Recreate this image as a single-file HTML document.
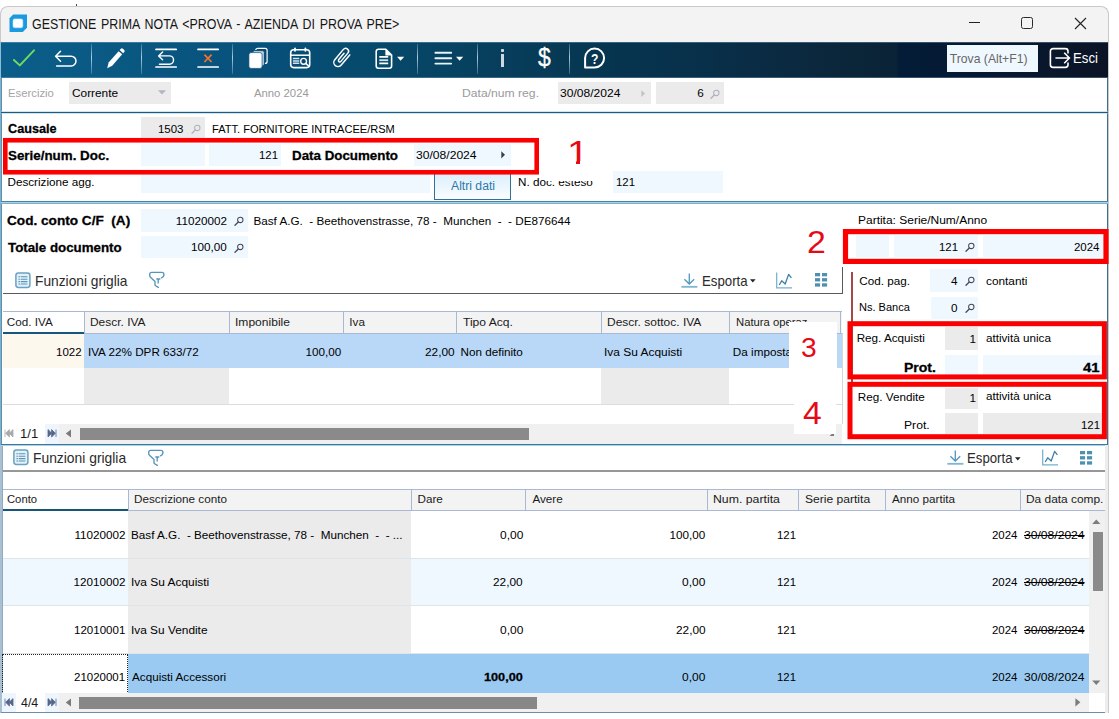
<!DOCTYPE html>
<html lang="it"><head><meta charset="utf-8"><title>GESTIONE PRIMA NOTA</title>
<style>
html,body{margin:0;padding:0;background:#fff;}
body{width:1119px;height:719px;position:relative;overflow:hidden;font-family:"Liberation Sans",sans-serif;}
#w div,#w span,#w svg{position:absolute;}
#w span{white-space:pre;}
#w{position:absolute;left:0;top:0;width:1119px;height:719px;overflow:hidden;}
</style></head><body><div id="w">
<div style="left:0;top:6px;width:1109px;height:707px;box-sizing:border-box;border:1px solid #c9c9c9;border-bottom:none;border-radius:8px 8px 0 0;background:#f3f3f3;"></div>
<div style="left:76px;top:4px;width:1px;height:2px;background:#2a4a7a;"></div>
<svg style="left:9px;top:14px;" width="18" height="18" viewBox="0 0 18 18"><path d="M4.2 0.5H18v13.2L13.8 18H0.5V4.2Z" fill="#1b9ae0"/><rect x="4" y="4.9" width="9.8" height="8.8" rx="1.7" fill="#fff" stroke="#bfe9fb" stroke-width=".6"/></svg>
<span style="left:32.38px;top:15px;font-size:14.5px;line-height:19px;color:#161616;transform:scaleX(0.8569);transform-origin:0 0;word-spacing:1.6px;">GESTIONE PRIMA NOTA &lt;PROVA - AZIENDA DI PROVA PRE&gt;</span>
<div style="left:969px;top:22.3px;width:11px;height:1.1px;background:#222;"></div>
<div style="left:1021px;top:17.4px;width:11.8px;height:11.4px;box-sizing:border-box;border:1.3px solid #2a2a2a;border-radius:2.4px;"></div>
<svg style="left:1074px;top:17px;" width="13" height="13" viewBox="0 0 13 13"><path d="M1 1L12 12M12 1L1 12" stroke="#222" stroke-width="1.1" fill="none"/></svg>
<div style="left:1px;top:42px;width:1107px;height:35.5px;background:linear-gradient(90deg,#0b5e8a 0%,#095882 12%,#07507a 24%,#064a6c 33%,#07405f 43%,#073954 51%,#06344f 56%,#08304a 63%,#0a2b43 69%,#0b263a 76%,#0a2236 80.9%,#031c37 81.1%,#071830 90%,#0b1426 100%);"></div>
<div style="left:1px;top:42px;width:1107px;height:1px;background:rgba(150,190,215,.35);"></div>
<div style="left:1px;top:76.6px;width:1107px;height:1px;background:rgba(150,190,215,.35);"></div>
<div style="left:0px;top:42px;width:1.4px;height:35.6px;background:#8fbcd6;"></div>
<div style="left:90.5px;top:44px;width:1.4px;height:30px;background:linear-gradient(180deg,rgba(190,215,230,.25),rgba(200,225,238,.85) 45%,rgba(190,215,230,.25));"></div>
<div style="left:140.5px;top:44px;width:1.4px;height:30px;background:linear-gradient(180deg,rgba(190,215,230,.25),rgba(200,225,238,.85) 45%,rgba(190,215,230,.25));"></div>
<div style="left:232px;top:44px;width:1.4px;height:30px;background:linear-gradient(180deg,rgba(190,215,230,.25),rgba(200,225,238,.85) 45%,rgba(190,215,230,.25));"></div>
<div style="left:417px;top:44px;width:1.4px;height:30px;background:linear-gradient(180deg,rgba(190,215,230,.25),rgba(200,225,238,.85) 45%,rgba(190,215,230,.25));"></div>
<div style="left:476.5px;top:44px;width:1.4px;height:30px;background:linear-gradient(180deg,rgba(190,215,230,.25),rgba(200,225,238,.85) 45%,rgba(190,215,230,.25));"></div>
<div style="left:568.5px;top:44px;width:1.4px;height:30px;background:linear-gradient(180deg,rgba(190,215,230,.25),rgba(200,225,238,.85) 45%,rgba(190,215,230,.25));"></div>
<svg style="left:12px;top:47px;" width="24" height="22" viewBox="0 0 24 22"><path d="M1.9 13L7.8 18.4L22 3.3" stroke="#74dc5c" stroke-width="1.9" fill="none" stroke-linecap="round" stroke-linejoin="round"/></svg>
<svg style="left:53px;top:47px;" width="26" height="22" viewBox="0 0 26 22"><path d="M7.5 4.2L2.6 9.2L7.5 14.2M3 9.2H18.1a4.9 4.9 0 0 1 0 9.8H3.6" stroke="#fff" stroke-width="1.5" fill="none" stroke-linecap="round" stroke-linejoin="round"/></svg>
<svg style="left:104.2px;top:47px;" width="22" height="24" viewBox="0 0 22 24"><path d="M3.2 21.2L4.6 15.6L14.6 4.2L18.2 7.2L8.2 18.8Z" fill="#fff"/><path d="M15.6 3.1L16.7 1.9a1.6 1.6 0 0 1 2.2-.1l1.3 1.1a1.6 1.6 0 0 1 .1 2.2L19.2 6.3Z" fill="#fff"/></svg>
<svg style="left:154px;top:47px;" width="24" height="23" viewBox="0 0 24 23"><path d="M2 2.4H22.2M2 20H22.2" stroke="#fff" stroke-width="1.7" fill="none" stroke-linecap="round"/><path d="M8.6 5.1L4.6 8.9L8.6 12.7M5 8.9H15.4a4.15 4.15 0 0 1 0 8.3H5.4" stroke="#fff" stroke-width="1.4" fill="none" stroke-linecap="round" stroke-linejoin="round"/></svg>
<svg style="left:196px;top:47px;" width="24" height="23" viewBox="0 0 24 23"><path d="M2 2.4H22.2M2 20H22.2" stroke="#fff" stroke-width="1.7" fill="none" stroke-linecap="round"/><path d="M8.4 7.6L15.6 15M15.6 7.6L8.4 15" stroke="#f0742a" stroke-width="1.7" fill="none"/></svg>
<svg style="left:247px;top:46px;" width="23" height="24" viewBox="0 0 23 24"><rect x="8.7" y="2.4" width="11.4" height="15" rx="2" fill="#0a4a70" stroke="#fff" stroke-width="1.2"/><rect x="5.6" y="4.6" width="11.8" height="15.4" rx="2" fill="#b4d4ea" stroke="#0a4a70" stroke-width="1"/><rect x="1.9" y="6.6" width="13.2" height="15.8" rx="2.2" fill="#fff" stroke="#0a4a70" stroke-width=".7"/></svg>
<svg style="left:288px;top:46px;" width="24" height="24" viewBox="0 0 24 24"><rect x="2.7" y="3.8" width="19" height="17.8" rx="3" fill="none" stroke="#fff" stroke-width="1.6"/><path d="M2.7 9.2H21.7" stroke="#fff" stroke-width="1.5" fill="none"/><path d="M7 2.4V4.8M17.4 2.4V4.8" stroke="#fff" stroke-width="1.9" fill="none" stroke-linecap="round"/><path d="M4.9 12.6H11.3M4.9 15H11.3M4.9 17.3H11.3" stroke="#cfe4f2" stroke-width="1.5"/><circle cx="15.6" cy="15.3" r="2.9" fill="#0a466a" stroke="#fff" stroke-width="1.4"/><path d="M17.7 17.4L21.6 20.8" stroke="#fff" stroke-width="1.5"/></svg>
<svg style="left:330px;top:46px;" width="24" height="24" viewBox="0 0 24 24"><g transform="translate(12,11.6) rotate(40)"><path d="M4.2 -7V6.2A4.2 4.2 0 0 1 -4.2 6.2V-7.2A2.9 2.9 0 0 1 1.6 -7.2V3.6A1.4 1.4 0 0 1 -1.2 3.6V-4.6" stroke="#fff" stroke-width="1.5" fill="none" stroke-linecap="round" stroke-linejoin="round"/></g></svg>
<svg style="left:374px;top:46px;" width="20" height="24" viewBox="0 0 20 24"><path d="M4.4 3.2H11.8L17.6 9V20a2.2 2.2 0 0 1-2.2 2.2H4.4a2.2 2.2 0 0 1-2.2-2.2V5.4A2.2 2.2 0 0 1 4.4 3.2Z" fill="none" stroke="#fff" stroke-width="1.6" stroke-linejoin="round"/><path d="M11.4 3V9.4H17.8Z" fill="#fff"/><path d="M5.3 10.9H14.2M5.3 17.4H14.2" stroke="#fff" stroke-width="1.6"/><path d="M5.3 14.2H14.2" stroke="#cfe4f2" stroke-width="1.8"/></svg>
<svg style="left:397px;top:56px;" width="8" height="6" viewBox="0 0 8 6"><path d="M0 .8H7.2L3.6 4.8Z" fill="#fff"/></svg>
<svg style="left:434px;top:50px;" width="19" height="16" viewBox="0 0 19 16"><path d="M1.4 2.7H17.2M1.4 8.2H17.2M1.4 13.6H17.2" stroke="#e6f3fb" stroke-width="1.9" stroke-linecap="round"/></svg>
<svg style="left:456px;top:56px;" width="8" height="6" viewBox="0 0 8 6"><path d="M0 .8H7.2L3.6 4.8Z" fill="#fff"/></svg>
<div style="left:500.7px;top:49.4px;width:3.2px;height:2.8px;background:#cfd8e0;border-radius:.8px;"></div>
<div style="left:500.7px;top:54.2px;width:3.2px;height:12.8px;background:#cfd8e0;"></div>
<span style="left:537.77px;top:41px;font-size:25px;line-height:32px;color:#fff;transform:scaleX(0.9208);transform-origin:0 0;-webkit-text-stroke:.3px #fff;">$</span>
<svg style="left:583px;top:46px;" width="24" height="24" viewBox="0 0 24 24"><path d="M11.6 2.6a9.5 9.5 0 0 1 0 19H2.1V12.1A9.5 9.5 0 0 1 11.6 2.6Z" fill="none" stroke="#fff" stroke-width="2" stroke-linejoin="round"/></svg>
<span style="left:590.65px;top:50px;font-size:14px;line-height:18px;color:#fff;font-weight:bold;transform:scaleX(0.8683);transform-origin:0 0;">?</span>
<div style="left:947px;top:45px;width:91px;height:27px;background:#f0f8ff;"></div>
<span style="left:949.76px;top:51px;font-size:12.2px;line-height:16px;color:#666;">Trova (Alt+F1)</span>
<svg style="left:1048px;top:46px;" width="23" height="24" viewBox="0 0 23 24"><path d="M20 7.4V5.2A2.6 2.6 0 0 0 17.4 2.6H5A2.6 2.6 0 0 0 2.4 5.2V18.8A2.6 2.6 0 0 0 5 21.4H17.4A2.6 2.6 0 0 0 20 18.8V16.6" fill="none" stroke="#fff" stroke-width="1.6"/><path d="M7.4 12H21M16.2 6.8L21.4 12L16.2 17.2" fill="none" stroke="#fff" stroke-width="1.6"/></svg>
<span style="left:1072.54px;top:49px;font-size:14.2px;line-height:18px;color:#fff;transform:scaleX(0.9309);transform-origin:0 0;">Esci</span>
<div style="left:1px;top:77.5px;width:1107px;height:635.5px;background:#fff;"></div>
<div style="left:0px;top:77.5px;width:2.4px;height:635.5px;background:#7fb0cc;"></div>
<div style="left:1.4px;top:77.5px;width:1px;height:635.5px;background:#5b91ae;"></div>
<div style="left:1107px;top:77.5px;width:1px;height:367.5px;background:#3f6f8a;"></div>
<div style="left:0px;top:445.4px;width:2.4px;height:268px;background:#a9c0d2;"></div>
<div style="left:1.6px;top:445.4px;width:0.8px;height:268px;background:#8fabc2;"></div>
<span style="left:7.70px;top:85px;font-size:11.7px;line-height:15px;color:#a4a4a4;transform:scaleX(0.9666);transform-origin:0 0;">Esercizio</span>
<div style="left:69px;top:82px;width:102px;height:22px;background:#ebebeb;"></div>
<span style="left:71.61px;top:85px;font-size:11.7px;line-height:15px;color:#000;transform:scaleX(1.0135);transform-origin:0 0;">Corrente</span>
<svg style="left:158px;top:90px;" width="9" height="6" viewBox="0 0 9 6"><path d="M0 .3H8L4 4.6Z" fill="#b4b4c4"/></svg>
<span style="left:254.40px;top:85px;font-size:11.7px;line-height:15px;color:#9a9a9a;transform:scaleX(0.9677);transform-origin:0 0;">Anno 2024</span>
<span style="left:461.83px;top:85px;font-size:11.7px;line-height:15px;color:#9a9a9a;transform:scaleX(1.0398);transform-origin:0 0;">Data/num reg.</span>
<div style="left:558px;top:82px;width:93.4px;height:22px;background:#ebebeb;"></div>
<span style="left:560.12px;top:85px;font-size:11.7px;line-height:15px;color:#000;transform:scaleX(1.0322);transform-origin:0 0;">30/08/2024</span>
<svg style="left:641px;top:89.6px;" width="5" height="8" viewBox="0 0 5 8"><path d="M.3 .3L4 3.6L.3 7Z" fill="#c2c2c8"/></svg>
<div style="left:656px;top:82px;width:68px;height:22px;background:#ebebeb;"></div>
<span style="left:697.37px;top:85px;font-size:11.7px;line-height:15px;color:#000;">6</span>
<svg style="left:710.4px;top:88.8px;" width="11" height="11" viewBox="0 0 11 11"><circle cx="6.3" cy="3.9" r="2.7" fill="none" stroke="#b0b0bc" stroke-width="1.05"/><path d="M4.3 6L1 9.3" stroke="#b0b0bc" stroke-width="1.3" stroke-linecap="round"/></svg>
<div style="left:1px;top:111.4px;width:1107px;height:1px;background:rgba(170,205,225,.55);"></div>
<div style="left:1px;top:112px;width:1107px;height:1px;background:#1c5a7e;"></div>
<div style="left:1px;top:113px;width:1107px;height:0.7px;background:rgba(170,205,225,.55);"></div>
<span style="left:7.89px;top:120px;font-size:13px;line-height:17px;color:#000;font-weight:bold;-webkit-text-stroke:.28px #000;transform:scaleX(0.9738);transform-origin:0 0;">Causale</span>
<div style="left:141px;top:117px;width:64px;height:22px;background:#ebebeb;"></div>
<span style="left:158.14px;top:121px;font-size:11.7px;line-height:15px;color:#000;transform:scaleX(0.9803);transform-origin:0 0;">1503</span>
<svg style="left:191.0px;top:124.2px;" width="11" height="11" viewBox="0 0 11 11"><circle cx="6.3" cy="3.9" r="2.7" fill="none" stroke="#b0b0bc" stroke-width="1.05"/><path d="M4.3 6L1 9.3" stroke="#b0b0bc" stroke-width="1.3" stroke-linecap="round"/></svg>
<span style="left:211.71px;top:121px;font-size:11.7px;line-height:15px;color:#000;transform:scaleX(0.9469);transform-origin:0 0;">FATT. FORNITORE INTRACEE/RSM</span>
<span style="left:8.00px;top:147px;font-size:13px;line-height:17px;color:#000;font-weight:bold;-webkit-text-stroke:.28px #000;transform:scaleX(1.0291);transform-origin:0 0;">Serie/num. Doc.</span>
<div style="left:141px;top:144px;width:64px;height:22px;background:#f0f8ff;"></div>
<div style="left:209px;top:144px;width:72px;height:22px;background:#f0f8ff;"></div>
<span style="left:259.35px;top:147px;font-size:11.7px;line-height:15px;color:#000;transform:scaleX(0.9736);transform-origin:0 0;">121</span>
<span style="left:291.93px;top:147px;font-size:13px;line-height:17px;color:#000;font-weight:bold;-webkit-text-stroke:.28px #000;transform:scaleX(1.0263);transform-origin:0 0;">Data Documento</span>
<div style="left:413.6px;top:144px;width:97px;height:22px;background:#f0f8ff;"></div>
<span style="left:415.72px;top:147px;font-size:11.7px;line-height:15px;color:#000;transform:scaleX(1.0357);transform-origin:0 0;">30/08/2024</span>
<svg style="left:500.6px;top:150.6px;" width="5" height="8" viewBox="0 0 5 8"><path d="M.3 .3L4 3.8L.3 7.4Z" fill="#3c3c48"/></svg>
<span style="left:7.46px;top:174px;font-size:11.7px;line-height:15px;color:#000;">Descrizione agg.</span>
<div style="left:141px;top:171px;width:289px;height:22px;background:#f0f8ff;"></div>
<div style="left:434px;top:170px;width:77px;height:30px;box-sizing:border-box;border:1px solid #34708f;background:linear-gradient(180deg,#d9edfb 0%,#e8f4fd 45%,#fafdff 100%);"></div>
<span style="left:451.00px;top:178px;font-size:12px;line-height:16px;color:#2c79a8;transform:scaleX(1.0155);transform-origin:0 0;">Altri dati</span>
<span style="left:518.06px;top:174px;font-size:11.7px;line-height:15px;color:#000;">N. doc. esteso</span>
<div style="left:545px;top:174.6px;width:51px;height:6.6px;background:#fff;"></div>
<div style="left:613.4px;top:171px;width:110px;height:22px;background:#f0f8ff;"></div>
<span style="left:615.75px;top:174px;font-size:11.7px;line-height:15px;color:#000;transform:scaleX(0.9736);transform-origin:0 0;">121</span>
<svg style="left:0px;top:134px;" width="545" height="45" viewBox="0 0 545 45"><rect x="5.3" y="6.25" width="531.4" height="32" fill="none" stroke="#fa0000" stroke-width="4.6"/></svg>
<span style="left:567.27px;top:130px;font-size:34px;line-height:44px;color:#e60a16;transform:scaleX(1.1494);transform-origin:0 0;">1</span>
<div style="left:565px;top:160.8px;width:11.1px;height:4.4px;background:#fff;"></div>
<div style="left:579.8px;top:160.8px;width:9px;height:4.4px;background:#fff;"></div>
<div style="left:1px;top:201px;width:1107px;height:1px;background:#4784a5;"></div>
<div style="left:1px;top:202px;width:1107px;height:1.4px;background:#a6d2e8;"></div>
<div style="left:1px;top:203.2px;width:1107px;height:0.8px;background:#7db2cd;"></div>
<span style="left:7.46px;top:212px;font-size:13px;line-height:17px;color:#000;font-weight:bold;-webkit-text-stroke:.28px #000;transform:scaleX(1.0468);transform-origin:0 0;">Cod. conto C/F  (A)</span>
<div style="left:141px;top:209px;width:107px;height:22.5px;background:#f0f8ff;"></div>
<span style="left:175.80px;top:213px;font-size:11.7px;line-height:15px;color:#000;">11020002</span>
<svg style="left:233.8px;top:216.4px;" width="11" height="11" viewBox="0 0 11 11"><circle cx="6.3" cy="3.9" r="2.7" fill="none" stroke="#474758" stroke-width="1.05"/><path d="M4.3 6L1 9.3" stroke="#474758" stroke-width="1.3" stroke-linecap="round"/></svg>
<span style="left:253.46px;top:213px;font-size:11.7px;line-height:15px;color:#000;">Basf A.G.  - Beethovenstrasse, 78 -  Munchen  -  - DE876644</span>
<span style="left:7.87px;top:239px;font-size:13px;line-height:17px;color:#000;font-weight:bold;-webkit-text-stroke:.28px #000;transform:scaleX(1.0244);transform-origin:0 0;">Totale documento</span>
<div style="left:141px;top:235.6px;width:107px;height:22.2px;background:#f0f8ff;"></div>
<span style="left:191.01px;top:239px;font-size:11.7px;line-height:15px;color:#000;">100,00</span>
<svg style="left:233.8px;top:242.8px;" width="11" height="11" viewBox="0 0 11 11"><circle cx="6.3" cy="3.9" r="2.7" fill="none" stroke="#474758" stroke-width="1.05"/><path d="M4.3 6L1 9.3" stroke="#474758" stroke-width="1.3" stroke-linecap="round"/></svg>
<svg style="left:14.6px;top:271.6px;" width="17" height="17" viewBox="0 0 17 17"><rect x=".9" y=".9" width="14" height="14.6" rx="2.4" fill="#e2f1fa" stroke="#69a2c2" stroke-width="1.5"/><path d="M3.4 4.8H12.4M3.4 7.2H12.4M3.4 9.6H12.4M3.4 12H12.4" stroke="#5b93b4" stroke-width="1.1"/><path d="M5.4 4.2V12.6" stroke="#e2f1fa" stroke-width=".8"/></svg>
<span style="left:34.90px;top:272px;font-size:14.5px;line-height:19px;color:#2b2b2b;transform:scaleX(0.9486);transform-origin:0 0;">Funzioni griglia</span>
<svg style="left:148.4px;top:271.4px;" width="18" height="18" viewBox="0 0 18 18"><path d="M13.4 6.8Q15.9 6 15.9 3.8V3.4Q15.9 1.4 13.9 1.4H3.7Q1.7 1.4 1.7 3.4V4.6Q1.7 5.5 2.5 6.2L7 10.5V13.4Q7 14.3 7.8 14.8L10.4 16.3" fill="none" stroke="#5796b8" stroke-width="1.35" stroke-linecap="round" stroke-linejoin="round"/><path d="M8.3 8H12.3M10.2 8V12.4" stroke="#5796b8" stroke-width="1.35" fill="none"/></svg>
<svg style="left:681.4px;top:272.8px;" width="17" height="16" viewBox="0 0 17 16"><path d="M8.3 .4V10.6M3.4 6.2L8.3 11L13.2 6.2" fill="none" stroke="#549abf" stroke-width="1.35"/><path d="M.4 13.8H16.4" stroke="#7fb4d2" stroke-width="1.8"/></svg>
<span style="left:701.94px;top:272px;font-size:14.5px;line-height:19px;color:#2b2b2b;transform:scaleX(0.9141);transform-origin:0 0;">Esporta</span>
<svg style="left:750px;top:278.8px;" width="7" height="5" viewBox="0 0 7 5"><path d="M0 .2H5.6L2.8 3.6Z" fill="#222"/></svg>
<svg style="left:775.4px;top:271.6px;" width="18" height="17" viewBox="0 0 18 17"><path d="M1.7 .5V15.9H17.1" fill="none" stroke="#79afcd" stroke-width="1.25"/><path d="M4.2 13L6.7 8.8L10.2 12L13.6 2.4L16.4 5.9" fill="none" stroke="#3f80a4" stroke-width="1.3" stroke-linejoin="round"/></svg>
<svg style="left:815px;top:273.2px;" width="13" height="14" viewBox="0 0 13 14"><rect x="0.00" y="0.00" width="5.1" height="3.3" fill="#4f90b0"/><rect x="7.00" y="0.00" width="5.1" height="3.3" fill="#4f90b0"/><rect x="0.00" y="5.15" width="5.1" height="3.3" fill="#4f90b0"/><rect x="7.00" y="5.15" width="5.1" height="3.3" fill="#4f90b0"/><rect x="0.00" y="10.30" width="5.1" height="3.3" fill="#4f90b0"/><rect x="7.00" y="10.30" width="5.1" height="3.3" fill="#4f90b0"/></svg>
<div style="left:3px;top:293px;width:840px;height:1px;background:#5a5a5a;"></div>
<div style="left:842px;top:267px;width:1px;height:27px;background:#5a5a5a;"></div>
<div style="left:3px;top:311.4px;width:839px;height:22.400000000000034px;background:#f3f3f3;"></div>
<div style="left:3px;top:311.4px;width:839px;height:1px;background:#a9b9d3;"></div>
<div style="left:3px;top:332.8px;width:839px;height:1px;background:#a9b9d3;"></div>
<div style="left:3px;top:312.4px;width:81px;height:21.400000000000034px;background:#fff;"></div>
<div style="left:3px;top:331.8px;width:81px;height:2px;background:#17557a;"></div>
<div style="left:84px;top:311.4px;width:1px;height:22.400000000000034px;background:#a9b9d3;"></div>
<div style="left:229px;top:311.4px;width:1px;height:22.400000000000034px;background:#a9b9d3;"></div>
<div style="left:343px;top:311.4px;width:1px;height:22.400000000000034px;background:#a9b9d3;"></div>
<div style="left:456px;top:311.4px;width:1px;height:22.400000000000034px;background:#a9b9d3;"></div>
<div style="left:601px;top:311.4px;width:1px;height:22.400000000000034px;background:#a9b9d3;"></div>
<div style="left:729px;top:311.4px;width:1px;height:22.400000000000034px;background:#a9b9d3;"></div>
<div style="left:840px;top:311.4px;width:1px;height:22.400000000000034px;background:#a9b9d3;"></div>
<span style="left:6.82px;top:314px;font-size:11.7px;line-height:15px;color:#1a1a1a;">Cod. IVA</span>
<span style="left:90.44px;top:314px;font-size:11.7px;line-height:15px;color:#1a1a1a;transform:scaleX(1.0212);transform-origin:0 0;">Descr. IVA</span>
<span style="left:235.31px;top:314px;font-size:11.7px;line-height:15px;color:#1a1a1a;transform:scaleX(1.0326);transform-origin:0 0;">Imponibile</span>
<span style="left:349.35px;top:314px;font-size:11.7px;line-height:15px;color:#1a1a1a;">Iva</span>
<span style="left:463.16px;top:314px;font-size:11.7px;line-height:15px;color:#1a1a1a;transform:scaleX(1.0333);transform-origin:0 0;">Tipo Acq.</span>
<span style="left:607.44px;top:314px;font-size:11.7px;line-height:15px;color:#1a1a1a;transform:scaleX(1.0248);transform-origin:0 0;">Descr. sottoc. IVA</span>
<span style="left:735.50px;top:314px;font-size:11.7px;line-height:15px;color:#1a1a1a;transform:scaleX(0.9642);transform-origin:0 0;">Natura operaz</span>
<div style="left:3px;top:333.8px;width:81px;height:34.6px;background:#fdf8ee;"></div>
<div style="left:84px;top:333.8px;width:758px;height:34.6px;background:#b9d8f7;"></div>
<span style="left:56.34px;top:344px;font-size:11.7px;line-height:15px;color:#000;transform:scaleX(0.9849);transform-origin:0 0;">1022</span>
<span style="left:87.95px;top:344px;font-size:11.7px;line-height:15px;color:#000;">IVA 22% DPR 633/72</span>
<span style="left:305.41px;top:344px;font-size:11.7px;line-height:15px;color:#000;">100,00</span>
<span style="left:424.81px;top:344px;font-size:11.7px;line-height:15px;color:#000;transform:scaleX(1.0122);transform-origin:0 0;">22,00</span>
<span style="left:460.46px;top:344px;font-size:11.7px;line-height:15px;color:#000;">Non definito</span>
<span style="left:604.33px;top:344px;font-size:11.7px;line-height:15px;color:#000;transform:scaleX(1.0203);transform-origin:0 0;">Iva Su Acquisti</span>
<span style="left:732.86px;top:344px;font-size:11.7px;line-height:15px;color:#000;">Da imposta</span>
<div style="left:84px;top:368.4px;width:145px;height:35.6px;background:#ebebeb;"></div>
<div style="left:601px;top:368.4px;width:128px;height:35.6px;background:#ebebeb;"></div>
<div style="left:3px;top:404px;width:839px;height:1px;background:#dcdcdc;"></div>
<div style="left:841.6px;top:333.4px;width:1px;height:90.6px;background:#d6d6d6;"></div>
<div style="left:3px;top:424px;width:839px;height:19.6px;background:#f0f0f0;"></div>
<div style="left:79.6px;top:427.8px;width:449.4px;height:12.4px;background:#8a8a8a;"></div>
<div style="left:2.4px;top:424.2px;width:57px;height:19.4px;background:#fff;"></div>
<div style="left:45px;top:424.2px;width:14px;height:19.4px;background:#eef5fc;"></div>
<svg style="left:4px;top:429.40000000000003px;" width="10" height="9" viewBox="0 0 10 9"><path d="M1 .6V8M9 .6V8L5.2 4.3ZM5.4 .6V8L1.6 4.3Z" fill="#a9a9ad" stroke="#a9a9ad" stroke-width=".8"/></svg>
<span style="left:20.22px;top:426px;font-size:12px;line-height:16px;color:#1a1a1a;transform:scaleX(1.0892);transform-origin:0 0;">1/1</span>
<svg style="left:47px;top:429.40000000000003px;" width="10" height="9" viewBox="0 0 10 9"><path d="M9 .6V8M1 .6V8L4.8 4.3ZM4.6 .6V8L8.4 4.3Z" fill="#56678a" stroke="#56678a" stroke-width=".8"/></svg>
<svg style="left:65px;top:429.40000000000003px;" width="7" height="9" viewBox="0 0 7 9"><path d="M6 .4V8.4L.8 4.4Z" fill="#7a7a7a"/></svg>
<svg style="left:829px;top:431px;" width="6" height="6" viewBox="0 0 6 6"><path d="M5 .6V5H.6Z" fill="#7c7c7c"/></svg>
<div style="left:788.8px;top:322px;width:48px;height:82.4px;background:#fff;"></div>
<div style="left:793.8px;top:404px;width:42.2px;height:29.6px;background:#fff;"></div>
<span style="left:801.07px;top:329px;font-size:28.2px;line-height:37px;color:#e60a16;">3</span>
<span style="left:803.23px;top:393px;font-size:31.2px;line-height:41px;color:#e60a16;transform:scaleX(1.0790);transform-origin:0 0;">4</span>
<span style="left:807.21px;top:222px;font-size:31.2px;line-height:41px;color:#e60a16;transform:scaleX(1.0848);transform-origin:0 0;">2</span>
<span style="left:857.84px;top:212px;font-size:11.7px;line-height:15px;color:#000;transform:scaleX(1.0247);transform-origin:0 0;">Partita: Serie/Num/Anno</span>
<div style="left:856px;top:235px;width:33px;height:22.4px;background:#f0f8ff;"></div>
<div style="left:894px;top:235px;width:84.4px;height:22.4px;background:#f0f8ff;"></div>
<div style="left:983px;top:235px;width:120px;height:22.4px;background:#f0f8ff;"></div>
<span style="left:938.75px;top:239px;font-size:11.7px;line-height:15px;color:#000;transform:scaleX(0.9736);transform-origin:0 0;">121</span>
<svg style="left:964.8px;top:242.20000000000002px;" width="11" height="11" viewBox="0 0 11 11"><circle cx="6.3" cy="3.9" r="2.7" fill="none" stroke="#474758" stroke-width="1.05"/><path d="M4.3 6L1 9.3" stroke="#474758" stroke-width="1.3" stroke-linecap="round"/></svg>
<span style="left:1074.23px;top:239px;font-size:11.7px;line-height:15px;color:#000;transform:scaleX(0.9802);transform-origin:0 0;">2024</span>
<div style="left:851.4px;top:272px;width:1.3px;height:111px;background:#a24a4a;"></div>
<span style="left:859.21px;top:273px;font-size:11.7px;line-height:15px;color:#000;">Cod. pag.</span>
<div style="left:930px;top:269.4px;width:48.4px;height:22.4px;background:#f0f8ff;"></div>
<span style="left:951.06px;top:273px;font-size:11.7px;line-height:15px;color:#000;">4</span>
<svg style="left:964.8px;top:276.40000000000003px;" width="11" height="11" viewBox="0 0 11 11"><circle cx="6.3" cy="3.9" r="2.7" fill="none" stroke="#474758" stroke-width="1.05"/><path d="M4.3 6L1 9.3" stroke="#474758" stroke-width="1.3" stroke-linecap="round"/></svg>
<span style="left:985.93px;top:273px;font-size:11.7px;line-height:15px;color:#000;transform:scaleX(1.0120);transform-origin:0 0;">contanti</span>
<span style="left:858.92px;top:299px;font-size:11.7px;line-height:15px;color:#000;transform:scaleX(0.9434);transform-origin:0 0;">Ns. Banca</span>
<div style="left:931px;top:296.8px;width:47.4px;height:21.8px;background:#f0f8ff;"></div>
<span style="left:951.12px;top:300px;font-size:11.7px;line-height:15px;color:#000;">0</span>
<svg style="left:964.8px;top:303.40000000000003px;" width="11" height="11" viewBox="0 0 11 11"><circle cx="6.3" cy="3.9" r="2.7" fill="none" stroke="#474758" stroke-width="1.05"/><path d="M4.3 6L1 9.3" stroke="#474758" stroke-width="1.3" stroke-linecap="round"/></svg>
<span style="left:856.66px;top:330px;font-size:11.7px;line-height:15px;color:#000;">Reg. Acquisti</span>
<div style="left:945.2px;top:327.4px;width:33.2px;height:22.6px;background:#ebebeb;"></div>
<span style="left:969.43px;top:331px;font-size:11.7px;line-height:15px;color:#000;">1</span>
<span style="left:985.93px;top:330px;font-size:11.7px;line-height:15px;color:#000;">attività unica</span>
<span style="left:903.89px;top:359px;font-size:13px;line-height:17px;color:#000;font-weight:bold;-webkit-text-stroke:.28px #000;transform:scaleX(1.0758);transform-origin:0 0;">Prot.</span>
<div style="left:945.2px;top:355px;width:33.2px;height:19.6px;background:#f0f8ff;"></div>
<div style="left:983px;top:355px;width:119.4px;height:19.6px;background:#f0f8ff;"></div>
<span style="left:1083.38px;top:359px;font-size:13px;line-height:17px;color:#000;font-weight:bold;-webkit-text-stroke:.28px #000;transform:scaleX(1.1503);transform-origin:0 0;">41</span>
<span style="left:857.86px;top:389px;font-size:11.7px;line-height:15px;color:#000;">Reg. Vendite</span>
<div style="left:945.2px;top:387.6px;width:33.2px;height:21px;background:#ebebeb;"></div>
<span style="left:969.43px;top:390px;font-size:11.7px;line-height:15px;color:#000;">1</span>
<span style="left:985.93px;top:388px;font-size:11.7px;line-height:15px;color:#000;">attività unica</span>
<span style="left:904.43px;top:417px;font-size:11.7px;line-height:15px;color:#000;transform:scaleX(1.0397);transform-origin:0 0;">Prot.</span>
<div style="left:945.2px;top:413.4px;width:33.2px;height:20.4px;background:#ebebeb;"></div>
<div style="left:983px;top:413.4px;width:119.4px;height:20.4px;background:#ebebeb;"></div>
<span style="left:1081.15px;top:417px;font-size:11.7px;line-height:15px;color:#000;transform:scaleX(0.9736);transform-origin:0 0;">121</span>
<svg style="left:838px;top:224px;" width="274" height="222" viewBox="0 0 274 222"><rect x="7.5" y="7.6" width="260.5" height="29.8" fill="none" stroke="#fa0000" stroke-width="5.2"/><rect x="12" y="99.7" width="254.4" height="53.2" fill="none" stroke="#fa0000" stroke-width="5"/><rect x="12" y="160.3" width="254.4" height="52.4" fill="none" stroke="#fa0000" stroke-width="5"/></svg>
<div style="left:1px;top:443.6px;width:1107px;height:1.2px;background:#3b7a9c;"></div>
<div style="left:1px;top:444.8px;width:1107px;height:0.8px;background:#a9d2e6;"></div>
<svg style="left:12.6px;top:449.4px;" width="17" height="17" viewBox="0 0 17 17"><rect x=".9" y=".9" width="14" height="14.6" rx="2.4" fill="#e2f1fa" stroke="#69a2c2" stroke-width="1.5"/><path d="M3.4 4.8H12.4M3.4 7.2H12.4M3.4 9.6H12.4M3.4 12H12.4" stroke="#5b93b4" stroke-width="1.1"/><path d="M5.4 4.2V12.6" stroke="#e2f1fa" stroke-width=".8"/></svg>
<span style="left:32.69px;top:449px;font-size:14.5px;line-height:19px;color:#2b2b2b;transform:scaleX(0.9548);transform-origin:0 0;">Funzioni griglia</span>
<svg style="left:146.8px;top:449.2px;" width="18" height="18" viewBox="0 0 18 18"><path d="M13.4 6.8Q15.9 6 15.9 3.8V3.4Q15.9 1.4 13.9 1.4H3.7Q1.7 1.4 1.7 3.4V4.6Q1.7 5.5 2.5 6.2L7 10.5V13.4Q7 14.3 7.8 14.8L10.4 16.3" fill="none" stroke="#5796b8" stroke-width="1.35" stroke-linecap="round" stroke-linejoin="round"/><path d="M8.3 8H12.3M10.2 8V12.4" stroke="#5796b8" stroke-width="1.35" fill="none"/></svg>
<svg style="left:947px;top:450.4px;" width="17" height="16" viewBox="0 0 17 16"><path d="M8.3 .4V10.6M3.4 6.2L8.3 11L13.2 6.2" fill="none" stroke="#549abf" stroke-width="1.35"/><path d="M.4 13.8H16.4" stroke="#7fb4d2" stroke-width="1.8"/></svg>
<span style="left:967.34px;top:449px;font-size:14.5px;line-height:19px;color:#2b2b2b;transform:scaleX(0.9100);transform-origin:0 0;">Esporta</span>
<svg style="left:1015.4px;top:456.6px;" width="7" height="5" viewBox="0 0 7 5"><path d="M0 .2H5.6L2.8 3.6Z" fill="#222"/></svg>
<svg style="left:1041px;top:449.4px;" width="18" height="17" viewBox="0 0 18 17"><path d="M1.7 .5V15.9H17.1" fill="none" stroke="#79afcd" stroke-width="1.25"/><path d="M4.2 13L6.7 8.8L10.2 12L13.6 2.4L16.4 5.9" fill="none" stroke="#3f80a4" stroke-width="1.3" stroke-linejoin="round"/></svg>
<svg style="left:1080.4px;top:451px;" width="13" height="14" viewBox="0 0 13 14"><rect x="0.00" y="0.00" width="5.1" height="3.3" fill="#4f90b0"/><rect x="7.00" y="0.00" width="5.1" height="3.3" fill="#4f90b0"/><rect x="0.00" y="5.15" width="5.1" height="3.3" fill="#4f90b0"/><rect x="7.00" y="5.15" width="5.1" height="3.3" fill="#4f90b0"/><rect x="0.00" y="10.30" width="5.1" height="3.3" fill="#4f90b0"/><rect x="7.00" y="10.30" width="5.1" height="3.3" fill="#4f90b0"/></svg>
<div style="left:3px;top:470.2px;width:1101.6px;height:1.5px;background:#979797;"></div>
<div style="left:3px;top:489.2px;width:1101.6px;height:21.400000000000034px;background:#f3f3f3;"></div>
<div style="left:3px;top:489.2px;width:1101.6px;height:1px;background:#a9b9d3;"></div>
<div style="left:3px;top:509.6px;width:1101.6px;height:1px;background:#a9b9d3;"></div>
<div style="left:3px;top:490.2px;width:125px;height:20.400000000000034px;background:#fff;"></div>
<div style="left:3px;top:508.6px;width:125px;height:2px;background:#17557a;"></div>
<div style="left:128px;top:489.2px;width:1px;height:21.400000000000034px;background:#a9b9d3;"></div>
<div style="left:411.4px;top:489.2px;width:1px;height:21.400000000000034px;background:#a9b9d3;"></div>
<div style="left:525.4px;top:489.2px;width:1px;height:21.400000000000034px;background:#a9b9d3;"></div>
<div style="left:707.4px;top:489.2px;width:1px;height:21.400000000000034px;background:#a9b9d3;"></div>
<div style="left:798.4px;top:489.2px;width:1px;height:21.400000000000034px;background:#a9b9d3;"></div>
<div style="left:885px;top:489.2px;width:1px;height:21.400000000000034px;background:#a9b9d3;"></div>
<div style="left:1020px;top:489.2px;width:1px;height:21.400000000000034px;background:#a9b9d3;"></div>
<div style="left:1104.6px;top:489.2px;width:1px;height:21.400000000000034px;background:#a9b9d3;"></div>
<span style="left:6.84px;top:491px;font-size:11.7px;line-height:15px;color:#1a1a1a;transform:scaleX(0.9626);transform-origin:0 0;">Conto</span>
<span style="left:134.06px;top:491px;font-size:11.7px;line-height:15px;color:#1a1a1a;">Descrizione conto</span>
<span style="left:417.46px;top:491px;font-size:11.7px;line-height:15px;color:#1a1a1a;">Dare</span>
<span style="left:532.40px;top:491px;font-size:11.7px;line-height:15px;color:#1a1a1a;">Avere</span>
<span style="left:713.42px;top:491px;font-size:11.7px;line-height:15px;color:#1a1a1a;transform:scaleX(1.0514);transform-origin:0 0;">Num. partita</span>
<span style="left:804.86px;top:491px;font-size:11.7px;line-height:15px;color:#1a1a1a;transform:scaleX(1.0330);transform-origin:0 0;">Serie partita</span>
<span style="left:892.00px;top:491px;font-size:11.7px;line-height:15px;color:#1a1a1a;">Anno partita</span>
<span style="left:1026.05px;top:491px;font-size:11.7px;line-height:15px;color:#1a1a1a;transform:scaleX(1.0181);transform-origin:0 0;">Da data comp.</span>
<div style="left:128px;top:510.6px;width:283.4px;height:48.39999999999998px;background:#ebebeb;"></div>
<div style="left:3px;top:558px;width:1085.6px;height:1px;background:#dfe4e8;"></div>
<span style="left:74.40px;top:527px;font-size:11.7px;line-height:15px;color:#000;">11020002</span>
<span style="left:131.06px;top:527px;font-size:11.7px;line-height:15px;color:#000;">Basf A.G.  - Beethovenstrasse, 78 -  Munchen  -  - ...</span>
<span style="left:499.52px;top:527px;font-size:11.7px;line-height:15px;color:#000;transform:scaleX(1.0238);transform-origin:0 0;">0,00</span>
<span style="left:669.41px;top:527px;font-size:11.7px;line-height:15px;color:#000;">100,00</span>
<span style="left:776.95px;top:527px;font-size:11.7px;line-height:15px;color:#000;transform:scaleX(0.9736);transform-origin:0 0;">121</span>
<span style="left:991.63px;top:527px;font-size:11.7px;line-height:15px;color:#000;transform:scaleX(0.9802);transform-origin:0 0;">2024</span>
<span style="left:1023.92px;top:527px;font-size:11.7px;line-height:15px;color:#000;transform:scaleX(1.0357);transform-origin:0 0;text-decoration:line-through;">30/08/2024</span>
<div style="left:3px;top:559px;width:1085.6px;height:47.39999999999998px;background:#f0f8ff;"></div>
<div style="left:128px;top:559px;width:283.4px;height:47.39999999999998px;background:#ebebeb;"></div>
<div style="left:3px;top:605.4px;width:1085.6px;height:1px;background:#dfe4e8;"></div>
<span style="left:73.52px;top:574px;font-size:11.7px;line-height:15px;color:#000;">12010002</span>
<span style="left:130.93px;top:574px;font-size:11.7px;line-height:15px;color:#000;transform:scaleX(1.0203);transform-origin:0 0;">Iva Su Acquisti</span>
<span style="left:493.21px;top:574px;font-size:11.7px;line-height:15px;color:#000;transform:scaleX(1.0122);transform-origin:0 0;">22,00</span>
<span style="left:681.92px;top:574px;font-size:11.7px;line-height:15px;color:#000;transform:scaleX(1.0238);transform-origin:0 0;">0,00</span>
<span style="left:776.95px;top:574px;font-size:11.7px;line-height:15px;color:#000;transform:scaleX(0.9736);transform-origin:0 0;">121</span>
<span style="left:991.63px;top:574px;font-size:11.7px;line-height:15px;color:#000;transform:scaleX(0.9802);transform-origin:0 0;">2024</span>
<span style="left:1023.92px;top:574px;font-size:11.7px;line-height:15px;color:#000;transform:scaleX(1.0357);transform-origin:0 0;text-decoration:line-through;">30/08/2024</span>
<div style="left:128px;top:606.4px;width:283.4px;height:47.39999999999998px;background:#ebebeb;"></div>
<div style="left:3px;top:652.8px;width:1085.6px;height:1px;background:#dfe4e8;"></div>
<span style="left:74.13px;top:622px;font-size:11.7px;line-height:15px;color:#000;transform:scaleX(0.9870);transform-origin:0 0;">12010001</span>
<span style="left:130.93px;top:622px;font-size:11.7px;line-height:15px;color:#000;transform:scaleX(1.0151);transform-origin:0 0;">Iva Su Vendite</span>
<span style="left:499.52px;top:622px;font-size:11.7px;line-height:15px;color:#000;transform:scaleX(1.0238);transform-origin:0 0;">0,00</span>
<span style="left:675.61px;top:622px;font-size:11.7px;line-height:15px;color:#000;transform:scaleX(1.0122);transform-origin:0 0;">22,00</span>
<span style="left:776.95px;top:622px;font-size:11.7px;line-height:15px;color:#000;transform:scaleX(0.9736);transform-origin:0 0;">121</span>
<span style="left:991.63px;top:622px;font-size:11.7px;line-height:15px;color:#000;transform:scaleX(0.9802);transform-origin:0 0;">2024</span>
<span style="left:1023.92px;top:622px;font-size:11.7px;line-height:15px;color:#000;transform:scaleX(1.0357);transform-origin:0 0;text-decoration:line-through;">30/08/2024</span>
<div style="left:128px;top:653.8px;width:960.6px;height:39.40000000000009px;background:#9acaf1;"></div>
<span style="left:74.43px;top:669px;font-size:11.7px;line-height:15px;color:#000;transform:scaleX(0.9813);transform-origin:0 0;">21020001</span>
<span style="left:132.00px;top:669px;font-size:11.7px;line-height:15px;color:#000;">Acquisti Accessori</span>
<span style="left:484.05px;top:669px;font-size:11.7px;line-height:15px;color:#000;font-weight:bold;-webkit-text-stroke:.28px #000;transform:scaleX(1.0852);transform-origin:0 0;">100,00</span>
<span style="left:681.92px;top:669px;font-size:11.7px;line-height:15px;color:#000;transform:scaleX(1.0238);transform-origin:0 0;">0,00</span>
<span style="left:776.95px;top:669px;font-size:11.7px;line-height:15px;color:#000;transform:scaleX(0.9736);transform-origin:0 0;">121</span>
<span style="left:991.63px;top:669px;font-size:11.7px;line-height:15px;color:#000;transform:scaleX(0.9802);transform-origin:0 0;">2024</span>
<span style="left:1023.92px;top:669px;font-size:11.7px;line-height:15px;color:#000;transform:scaleX(1.0357);transform-origin:0 0;">30/08/2024</span>
<div style="left:2.4px;top:653.8px;width:126px;height:40px;box-sizing:border-box;border:1px dotted #222;border-bottom:none;"></div>
<div style="left:1088.6px;top:510.6px;width:16px;height:182.6px;background:#f0f0f0;"></div>
<svg style="left:1092px;top:518.6px;" width="9" height="6" viewBox="0 0 9 6"><path d="M.2 5H8.4L4.3 .6Z" fill="#7c7c7c"/></svg>
<div style="left:1092.8px;top:531.6px;width:10.6px;height:59px;background:#8a8a8a;"></div>
<svg style="left:1092px;top:680.4px;" width="9" height="6" viewBox="0 0 9 6"><path d="M.2 .6H8.4L4.3 5Z" fill="#7c7c7c"/></svg>
<div style="left:3px;top:693.2px;width:1085.6px;height:19.4px;background:#f0f0f0;"></div>
<div style="left:79px;top:696.8px;width:458px;height:12.4px;background:#878787;"></div>
<svg style="left:1075.4px;top:698.4px;" width="6" height="9" viewBox="0 0 6 9"><path d="M.4 .2V8.4L5.4 4.3Z" fill="#7c7c7c"/></svg>
<div style="left:1088.6px;top:693.2px;width:16px;height:19.4px;background:#fff;"></div>
<div style="left:2.4px;top:693.0px;width:57px;height:19.4px;background:#fff;"></div>
<div style="left:45px;top:693.0px;width:14px;height:19.4px;background:#eef5fc;"></div>
<div style="left:2.4px;top:693.0px;width:13.8px;height:19.4px;background:#eef5fc;"></div>
<svg style="left:4px;top:698.2px;" width="10" height="9" viewBox="0 0 10 9"><path d="M1 .6V8M9 .6V8L5.2 4.3ZM5.4 .6V8L1.6 4.3Z" fill="#56678a" stroke="#56678a" stroke-width=".8"/></svg>
<span style="left:20.95px;top:695px;font-size:12px;line-height:16px;color:#1a1a1a;transform:scaleX(1.0323);transform-origin:0 0;">4/4</span>
<svg style="left:47px;top:698.2px;" width="10" height="9" viewBox="0 0 10 9"><path d="M9 .6V8M1 .6V8L4.8 4.3ZM4.6 .6V8L8.4 4.3Z" fill="#56678a" stroke="#56678a" stroke-width=".8"/></svg>
<svg style="left:65px;top:698.2px;" width="7" height="9" viewBox="0 0 7 9"><path d="M6 .4V8.4L.8 4.4Z" fill="#7a7a7a"/></svg>
<div style="left:1104.6px;top:445.4px;width:4.4px;height:267.6px;background:#ededed;"></div>
<div style="left:1108px;top:445.4px;width:1px;height:267.6px;background:#cdcdcd;"></div>
<div style="left:1px;top:712.4px;width:1104px;height:1px;background:#6d8fab;"></div>
<div style="left:0px;top:713.2px;width:1119px;height:6px;background:#fff;"></div>
</div></body></html>
